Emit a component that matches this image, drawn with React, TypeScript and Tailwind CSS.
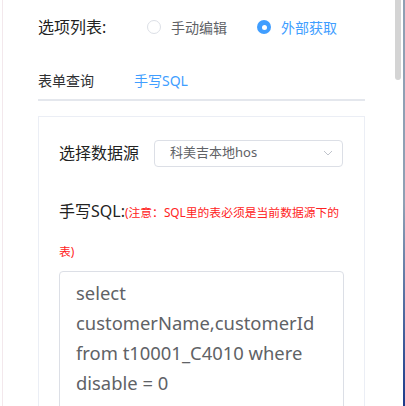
import React from "react";

const font = { fontFamily: '"Noto Sans", "Noto Sans CJK SC", sans-serif' };

function Radio({ checked, label }: { checked?: boolean; label: string }) {
  return (
    <label className="flex items-center gap-[10px]">
      {checked ? (
        <span className="w-[14px] h-[14px] rounded-full bg-[#409eff] flex items-center justify-center">
          <span className="w-[5px] h-[5px] rounded-full bg-white" />
        </span>
      ) : (
        <span className="w-[14px] h-[14px] rounded-full border border-[#dcdfe6] bg-white" />
      )}
      <span className={`text-[14px] ${checked ? "text-[#409eff]" : "text-[#606266]"}`}>{label}</span>
    </label>
  );
}

export default function App() {
  return (
    <div className="flex w-[405px] h-[406px] overflow-hidden bg-white" style={font}>
      <div className="w-[2px]" />
      <div className="w-[1px] bg-[#f3e8ec]" />

      <main className="flex-1 pl-[35px] pr-[28px] pt-[7px]">
        {/* option source */}
        <div className="flex items-center h-10">
          <span className="text-[16px] text-[#222] w-[109px]">选项列表:</span>
          <div className="flex items-center gap-[30px]">
            <Radio label="手动编辑" />
            <Radio checked label="外部获取" />
          </div>
        </div>

        {/* tabs */}
        <div className="mt-[14px] border-b-2 border-[#e4e7ed]">
          <div className="flex h-[38px] items-center text-[14px]">
            <span className="pr-5 text-[#303133]">表单查询</span>
            <span className="px-5 text-[#409eff]">手写SQL</span>
          </div>
        </div>

        {/* sql card */}
        <div className="mt-[15px] border border-[#ebeef5] px-5 pt-5 h-[400px]">
          <div className="flex items-center h-8">
            <span className="w-[95px] text-[16px] text-[#222]">选择数据源</span>
            <div className="w-[189px] h-[27px] border border-[#dcdfe6] rounded-[4px] flex items-center justify-between pl-[15px] pr-[9px]">
              <span className="text-[13px] text-[#606266]">科美吉本地hos</span>
              <svg width="10" height="6" viewBox="0 0 10 6" fill="none">
                <polyline points="1,1 5,5 9,1" stroke="#c0c4cc" strokeWidth="1" />
              </svg>
            </div>
          </div>

          <div className="mt-[22px] h-[80px] leading-[40px]">
            <div className="h-10 whitespace-nowrap">
              <span className="text-[16px] text-[#222]">手写SQL:</span>
              <span className="text-[11.8px] text-[#f22]">(注意：SQL里的表必须是当前数据源下的</span>
            </div>
            <div className="h-10 text-[11.8px] text-[#f22]">表)</div>
          </div>

          <div className="w-[285px] h-[200px] border border-[#dcdfe6] rounded-[4px] pt-[6px] px-[16px] text-[18.4px] leading-[30px] text-[#606266]">
            select customerName,customerId from t10001_C4010 where disable = 0
          </div>
        </div>
      </main>

      {/* scrollbar */}
      <div className="w-[10px] pl-[2px] pr-[2px]">
        <div className="w-[6px] h-[80px] rounded-b-[3px] bg-[#d4d4d4]" />
      </div>
      <div className="w-[2px] bg-gradient-to-b from-[#8fa0b4] via-[#8fa0b4] to-[#1e3a8a]" />
    </div>
  );
}
